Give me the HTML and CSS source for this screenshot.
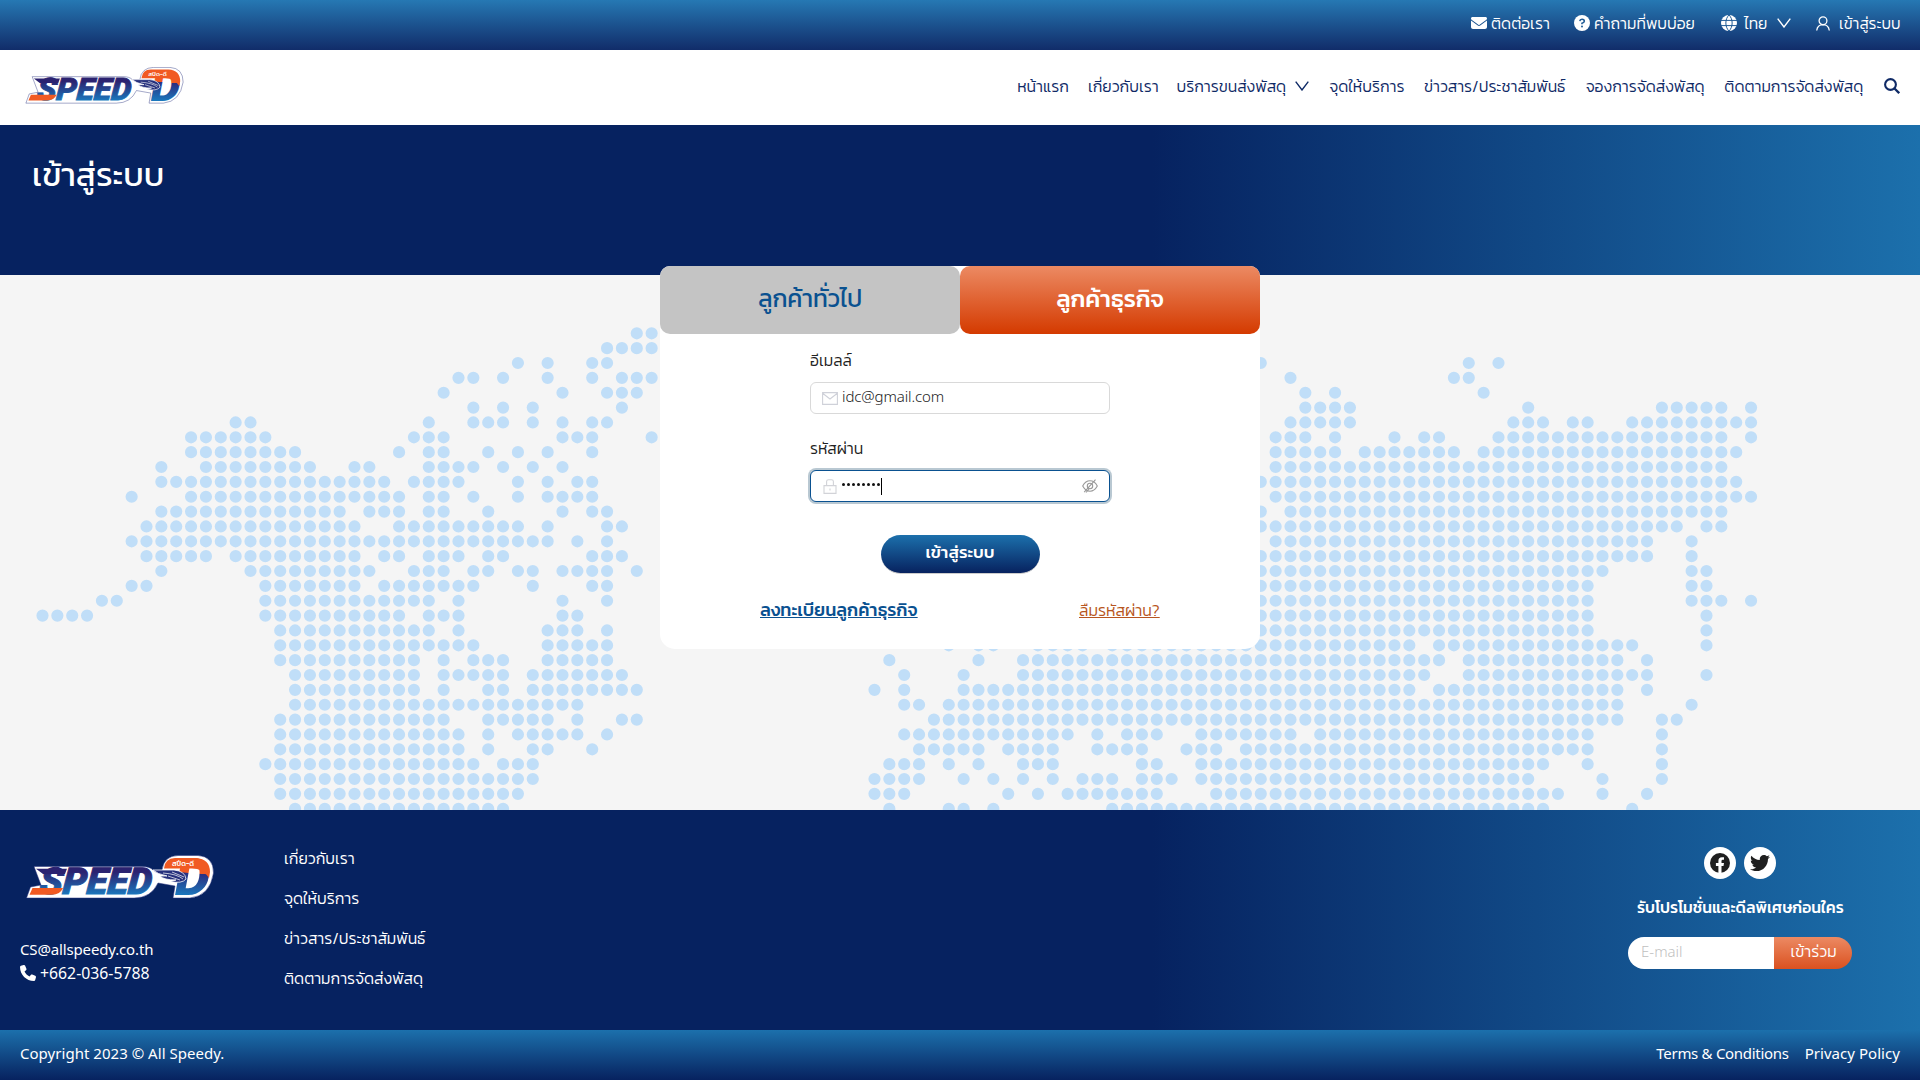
FILE: index.html
```html
<!DOCTYPE html>
<html lang="th">
<head>
<meta charset="utf-8">
<title>Speed-D</title>
<link rel="stylesheet" href="styles.css">
</head>
<body>
<svg class="defs" width="0" height="0" aria-hidden="true">
  <defs>
    <linearGradient id="letters" gradientUnits="userSpaceOnUse" x1="0" y1="13" x2="0" y2="40"><stop offset=".15" stop-color="#2b2270"/><stop offset="1" stop-color="#1b78bd"/></linearGradient>
    <linearGradient id="dee" gradientUnits="userSpaceOnUse" x1="160" y1="2" x2="157" y2="40"><stop offset=".4" stop-color="#f15a22"/><stop offset=".42" stop-color="#2b2f80"/><stop offset="1" stop-color="#1b78bd"/></linearGradient>
    <symbol id="logo" viewBox="0 0 188 44">
      <path class="logo-halo" d="M8 11.500 H116 Q124 11.500 127 15 L136 15 Q138 .8 152 .5 H172 Q187.500 1.500 187.500 18 Q184 41 164 43 H147 L149 31 L132 28 Q125 43 108 43 H.5 L4.500 32 L15 30 Z"/>
      <g class="logo-word" transform="skewX(-5)">
        <text x="16.500" y="39.500" textLength="112" lengthAdjust="spacingAndGlyphs">SPEED</text>
      </g>
      <path class="logo-blue" d="M10 13.700 H41 L39 19 H17 Z"/>
      <path class="logo-orange" d="M6.500 33 H37 Q34 39.800 26 39.800 H3.500 Z"/>
      <text class="logo-d" x="149" y="40" textLength="35" lengthAdjust="spacingAndGlyphs">D</text>
      <path class="logo-orange" d="M138 13.500 Q139 3 149 3 H170 Q184 4 184 17 L183 23 Q177 13.500 166 13.500 Z"/>
      <path class="logo-wing" d="M127 15 H148 Q159 16 160 24 Q156 29 144 26.500 L150 25 Q138 25 134 21 H141 Q131 19 127 15 Z"/>
      <path class="logo-feather" d="M137 18 Q151 19 157 24 M142 21 L154 25 M146 17 L158 22"/>
      <text class="logo-tag" x="146" y="10.500" textLength="22" lengthAdjust="spacingAndGlyphs">สปีด-ดี</text>
    </symbol>
    <symbol id="chevron" viewBox="0 0 14 10"><path d="M.7 .7 L7 9 L13.3 .7" fill="none" stroke="currentColor" stroke-width="1.4"/></symbol>
  </defs>
</svg>

<header>
  <div class="topbar">
    <a class="top-contact"><svg width="16" height="16" viewBox="0 0 512 512"><path fill="currentColor" d="M48 64C21.500 64 0 85.500 0 112c0 15.100 7.100 29.300 19.200 38.400L236.800 313.600c11.400 8.500 27 8.500 38.400 0L492.800 150.400c12.100-9.100 19.200-23.300 19.200-38.400c0-26.500-21.500-48-48-48H48zM0 176V384c0 35.300 28.700 64 64 64H448c35.300 0 64-28.700 64-64V176L294.400 339.200c-22.800 17.100-54 17.100-76.800 0L0 176z"/></svg><span class="w58">ติดต่อเรา</span></a>
    <a class="top-faq"><svg width="16" height="16" viewBox="0 0 16 16"><circle cx="8" cy="8" r="8" fill="#fff"/><path d="M5.800 6.100 Q6 4.300 8 4.300 Q10.300 4.300 10.300 6.200 Q10.300 7.400 8 8.300 V9.300" fill="none" stroke="#1f5b95" stroke-width="1.600"/><circle cx="8" cy="11.500" r="1" fill="#1f5b95"/></svg><span class="w102">คำถามที่พบบ่อย</span></a>
    <a class="top-lang"><svg width="16" height="16" viewBox="0 0 16 16"><circle cx="8" cy="8" r="8" fill="#fff"/><path d="M0 5.400H16M0 10.600H16M8 0C3.800 4 3.800 12 8 16M8 0C12.200 4 12.200 12 8 16" fill="none" stroke="#1f5b95" stroke-width="1"/></svg><span class="w23">ไทย</span><svg class="chev" width="14" height="10"><use href="#chevron"/></svg></a>
    <a class="top-login"><svg width="14" height="15" viewBox="0 0 14 15"><g fill="none" stroke="currentColor" stroke-width="1.300"><circle cx="7" cy="4.800" r="3.900"/><path d="M.7 14.500 Q1.500 8.800 7 8.700 Q12.500 8.800 13.300 14.500"/></g></svg><span class="w60">เข้าสู่ระบบ</span></a>
  </div>
  <nav class="nav">
    <svg class="nav-logo" width="159" height="37"><use href="#logo"/></svg>
    <div class="nav-links">
      <a class="w50">หน้าแรก</a>
      <a class="w68">เกี่ยวกับเรา</a>
      <a class="nav-drop"><span class="w109">บริการขนส่งพัสดุ</span><svg width="14" height="10"><use href="#chevron"/></svg></a>
      <a class="w74">จุดให้บริการ</a>
      <a class="w141">ข่าวสาร/ประชาสัมพันธ์</a>
      <a class="w118">จองการจัดส่งพัสดุ</a>
      <a class="w139">ติดตามการจัดส่งพัสดุ</a>
      <svg width="16" height="16" viewBox="0 0 16 16"><circle cx="6.500" cy="6.500" r="5.400" fill="none" stroke="currentColor" stroke-width="2.100"/><path d="M10.500 10.500 L15.200 15.200" stroke="currentColor" stroke-width="2.300"/></svg>
    </div>
  </nav>
</header>

<section class="banner"><h1>เข้าสู่ระบบ</h1></section>

<main class="main">
  <svg class="map" width="1920" height="535" aria-hidden="true">
    <g transform="translate(42.5 58.3) scale(14.857)">
      <path class="dots" d="M40 0h1.1
M38 1h3.1
M32 2h.1M34 2h.1M37 2h1.1M82 2h.1M96 2h.1M98 2h.1
M28 3h1.1M31 3h.1M34 3h.1M37 3h.1M39 3h2.1M84 3h.1M95 3h1.1
M27 4h.1M35 4h.1M38 4h2.1M85 4h.1M87 4h.1M97 4h.1
M29 5h.1M31 5h.1M33 5h.1M39 5h.1M85 5h3.1M100 5h.1M109 5h4.1M115 5h.1
M13 6h1.1M26 6h.1M29 6h2.1M33 6h.1M35 6h.1M37 6h1.1M84 6h4.1M99 6h2.1M103 6h1.1M107 6h8.1
M10 7h5.1M25 7h2.1M35 7h2.1M41 7h.1M83 7h2.1M87 7h.1M91 7h.1M93 7h1.1M98 7h15.1M115 7h.1
M10 8h7.1M24 8h.1M26 8h1.1M30 8h.1M32 8h.1M34 8h.1M37 8h.1M83 8h4.1M89 8h6.1M97 8h17.1
M8 9h.1M11 9h7.1M21 9h1.1M26 9h3.1M31 9h.1M33 9h.1M35 9h.1M83 9h30.1
M8 10h15.1M25 10h3.1M32 10h.1M34 10h.1M36 10h1.1M82 10h32.1
M6 11h.1M10 11h14.1M26 11h1.1M29 11h.1M32 11h.1M34 11h3.1M83 11h32.1
M8 12h12.1M22 12h2.1M26 12h1.1M30 12h.1M35 12h.1M37 12h1.1M82 12h.1M84 12h29.1
M7 13h14.1M24 13h8.1M34 13h.1M38 13h1.1M82 13h28.1M112 13h1.1
M6 14h28.1M36 14h.1M38 14h.1M83 14h25.1M111 14h.1
M7 15h4.1M13 15h8.1M23 15h1.1M26 15h2.1M30 15h1.1M37 15h2.1M82 15h26.1M111 15h.1
M8 16h.1M14 16h8.1M25 16h2.1M29 16h1.1M32 16h1.1M35 16h3.1M40 16h.1M82 16h23.1M111 16h1.1
M6 17h1.1M15 17h6.1M23 17h6.1M33 17h.1M37 17h1.1M82 17h22.1M111 17h1.1
M4 18h1.1M15 18h11.1M28 18h.1M35 18h.1M38 18h.1M82 18h22.1M111 18h2.1M115 18h.1
M0 19h3.1M15 19h9.1M26 19h2.1M35 19h1.1M82 19h22.1M112 19h.1
M16 20h10.1M28 20h.1M34 20h2.1M38 20h.1M82 20h22.1M112 20h.1
M16 21h13.1M34 21h4.1M61 21h.1M63 21h1.1M67 21h3.1M72 21h20.1M94 21h13.1M112 21h.1
M16 22h9.1M27 22h.1M29 22h2.1M34 22h4.1M57 22h.1M63 22h.1M66 22h28.1M96 22h10.1M108 22h.1
M17 23h8.1M27 23h4.1M33 23h6.1M58 23h.1M62 23h.1M66 23h27.1M96 23h12.1M112 23h.1
M17 24h8.1M27 24h.1M30 24h1.1M33 24h7.1M56 24h.1M58 24h.1M62 24h30.1M94 24h12.1M108 24h.1
M17 25h19.1M58 25h1.1M61 25h45.1M111 25h.1
M16 26h11.1M30 26h4.1M36 26h.1M39 26h1.1M60 26h46.1M109 26h1.1
M16 27h12.1M30 27h.1M32 27h4.1M38 27h.1M58 27h11.1M71 27h.1M73 27h2.1M78 27h6.1M86 27h18.1M109 27h.1
M16 28h12.1M30 28h.1M33 28h1.1M37 28h.1M59 28h4.1M65 28h3.1M71 28h3.1M77 28h2.1M81 28h23.1M109 28h.1
M15 29h14.1M31 29h2.1M57 29h2.1M61 29h.1M63 29h.1M66 29h2.1M74 29h1.1M78 29h23.1M104 29h.1M109 29h.1
M16 30h17.1M56 30h3.1M62 30h.1M64 30h.1M66 30h.1M68 30h.1M70 30h2.1M74 30h2.1M78 30h22.1M105 30h.1M109 30h.1
M16 31h16.1M56 31h2.1M65 31h.1M67 31h.1M69 31h6.1M79 31h23.1M105 31h.1M108 31h.1
M17 32h14.1M57 32h.1M61 32h1.1M64 32h.1M72 32h29.1M107 32h.1"/>
    </g>
  </svg>
  <div class="card">
    <div class="tabs">
      <button class="tab"><span class="w104">ลูกค้าทั่วไป</span></button>
      <button class="tab tab-active"><span class="w108">ลูกค้าธุรกิจ</span></button>
    </div>
    <form class="form">
      <label class="w42">อีเมลล์</label>
      <div class="field">
        <svg width="16" height="13" viewBox="0 0 16 13"><path d="M.6 .6H15.400V12.400H.6ZM.6 1.200L8 7L15.400 1.200" fill="none" stroke="#cfd1d9" stroke-width="1.100"/></svg>
        <span class="value">idc@gmail.com</span>
      </div>
      <label class="w54">รหัสผ่าน</label>
      <div class="field focus">
        <svg class="lock" width="14" height="15" viewBox="0 0 14 15"><path d="M1 6.600H13V14.400H1ZM3.600 6.600V2.600Q3.600 .7 5.500 .7H8.500Q10.400 .7 10.400 2.600V6.600M7 9.500V11.500" fill="none" stroke="#d2d3d8" stroke-width="1.100"/></svg>
        <span class="mask"><i></i><i></i><i></i><i></i><i></i><i></i><i></i><i></i></span><span class="caret"></span>
        <svg class="eye" width="16" height="14" viewBox="0 0 16 14"><g fill="none" stroke="#999" stroke-width="1.100"><path d="M.7 7Q3.500 1.800 8 1.800Q12.500 1.800 15.300 7Q12.500 12.200 8 12.200Q3.500 12.200 .7 7Z"/><circle cx="8" cy="7" r="2.700"/><path d="M2.200 13.200L13.500 .6M4 13.500L7 10"/></g></svg>
      </div>
      <button class="submit"><span class="w72">เข้าสู่ระบบ</span></button>
    </form>
    <div class="card-links">
      <a class="register w159">ลงทะเบียนลูกค้าธุรกิจ</a>
      <a class="forgot w81">ลืมรหัสผ่าน?</a>
    </div>
  </div>
</main>

<footer>
  <div class="footer-main">
    <div class="company">
      <svg width="188" height="44"><use href="#logo"/></svg>
      <p class="mail">CS@allspeedy.co.th</p>
      <p class="phone"><svg width="16" height="16" viewBox="0 0 512 512"><path fill="currentColor" d="M164.900 24.600c-7.700-18.600-28-28.500-47.400-23.200l-88 24C12.100 30.200 0 46 0 64C0 311.400 200.600 512 448 512c18 0 33.800-12.100 38.600-29.500l24-88c5.300-19.400-4.600-39.700-23.200-47.400l-96-40c-16.300-6.800-35.200-2.100-46.300 11.600L304.700 368C234.300 334.700 177.300 277.700 144 207.300L193.300 167c13.700-11.200 18.400-30 11.600-46.300l-40-96z"/></svg><span>+662-036-5788</span></p>
    </div>
    <div class="footer-links">
      <a class="w68">เกี่ยวกับเรา</a>
      <a class="w74">จุดให้บริการ</a>
      <a class="w141">ข่าวสาร/ประชาสัมพันธ์</a>
      <a class="w139">ติดตามการจัดส่งพัสดุ</a>
    </div>
    <div class="subscribe">
      <div class="social">
        <a><svg width="20" height="20" viewBox="0 0 20 20"><circle cx="10" cy="10" r="10" fill="#1f1f1f"/><path d="M8.400 20V13H5.900V10.100H8.400V7.900Q8.400 4.300 11.900 4.300H14V6.800H12.800Q11.500 6.800 11.500 8.100V10.100H14L13.500 13H11.500V20Z" fill="#fff"/></svg></a>
        <a><svg width="20" height="20" viewBox="0 0 512 512"><path fill="#1f1f1f" d="M459.370 151.716c.325 4.548.325 9.097.325 13.645 0 138.720-105.583 298.558-298.558 298.558-59.452 0-114.680-17.219-161.137-47.106 8.447.974 16.568 1.299 25.340 1.299 49.055 0 94.213-16.568 130.274-44.832-46.132-.975-84.792-31.188-98.112-72.772 6.498.974 12.995 1.624 19.818 1.624 9.421 0 18.843-1.300 27.614-3.573-48.081-9.747-84.143-51.980-84.143-102.985v-1.299c13.969 7.797 30.214 12.670 47.431 13.319-28.264-18.843-46.781-51.005-46.781-87.391 0-19.492 5.197-37.360 14.294-52.954 51.655 63.675 129.300 105.258 216.365 109.807-1.624-7.797-2.599-15.918-2.599-24.040 0-57.828 46.782-104.934 104.934-104.934 30.213 0 57.502 12.670 76.670 33.137 23.715-4.548 46.456-13.320 66.599-25.340-7.798 24.366-24.366 44.833-46.132 57.827 21.117-2.273 41.584-8.122 60.426-16.243-14.292 20.791-32.161 39.308-52.628 54.253z"/></svg></a>
      </div>
      <h2 class="w206">รับโปรโมชั่นและดีลพิเศษก่อนใคร</h2>
      <div class="join"><span class="join-input">E-mail</span><button class="join-btn"><span class="w45">เข้าร่วม</span></button></div>
    </div>
  </div>
  <div class="footer-bottom"><span class="copy">Copyright 2023 © All Speedy.</span><div class="legal"><a>Terms &amp; Conditions</a><a>Privacy Policy</a></div></div>
</footer>
</body>
</html>
```
FILE: styles.css
```css
* { box-sizing: border-box; }
body { margin: 0; width: 1920px; font: 300 15.800px/24px Kanit, "Noto Sans Thai", "Noto Sans", Loma, sans-serif; color: #222; background: #f5f5f5; overflow: hidden; }
h1, h2, p { margin: 0; }
svg { display: block; flex: none; }
button { border: 0; padding: 0; font: inherit; display: flex; align-items: center; justify-content: center; }
.defs { position: absolute; }
.w23, .w42, .w45, .w50, .w54, .w58, .w60, .w68, .w72, .w74, .w81, .w102, .w104, .w108, .w109, .w118, .w139, .w141, .w159, .w206 { display: block; white-space: nowrap; flex: none; }
.w23 { width: 23px; } .w42 { width: 42px; } .w45 { width: 45px; } .w50 { width: 50px; } .w54 { width: 54px; }
.w58 { width: 58px; } .w60 { width: 60px; } .w68 { width: 68px; } .w72 { width: 72px; } .w74 { width: 74px; }
.w81 { width: 81px; } .w102 { width: 102px; } .w104 { width: 104px; } .w108 { width: 108px; } .w109 { width: 109px; }
.w118 { width: 118px; } .w139 { width: 139px; } .w141 { width: 141px; } .w159 { width: 159px; } .w206 { width: 206px; }

.topbar { height: 50px; display: flex; justify-content: flex-end; align-items: center; gap: 25px; padding: 0 21px 4px; color: #fff; background: linear-gradient(#2678b3, #112c69); }
.topbar a { display: flex; align-items: center; gap: 4px; }
.topbar span, .nav-links .w50, .nav-links .w68, .nav-links .w74, .nav-links .w109, .nav-links .w118, .nav-links .w139, .nav-links .w141 { padding-top: 2px; }
.topbar .top-lang { gap: 7px; }
.topbar .top-login { gap: 9px; font-size: 15.500px; }
.chev { margin-left: 3px; }

.nav { height: 75px; background: #fff; color: #0f2a66; display: flex; justify-content: space-between; padding: 0 20px 0 25px; }
.nav-logo { margin-top: 17px; }
.nav-links { display: flex; align-items: center; gap: 20.700px; padding-bottom: 3px; }
.nav-drop { display: flex; align-items: center; gap: 9px; }

.banner, .footer-main { background: linear-gradient(90deg, #062260 60%, #1c70ac); }
.banner { height: 150px; padding: 29px 32px; }
h1 { color: #fff; font-size: 33px; line-height: 42px; font-weight: 400; }

.main { height: 535px; position: relative; display: flex; justify-content: center; align-items: flex-start; }
.map { position: absolute; inset: 0; }
.dots { fill: none; stroke: #c0def8; stroke-width: .82; stroke-linecap: round; stroke-dasharray: 0 1; }
.card { position: relative; width: 600px; height: 383px; margin-top: -9px; background: #fff; border-radius: 10px 10px 15px 15px; }
.tabs { display: flex; height: 68px; }
.tab { flex: 1; border-radius: 10px; background: #c4c4c4; color: #0a5190; font-size: 24.500px; font-weight: 400; letter-spacing: -.1px; padding-bottom: 2px; }
.tab-active { color: #fff; background: linear-gradient(#ec8a63, #d43a00); font-size: 24px; font-weight: 500; }
.form { width: 300px; margin: 0 auto; padding-top: 15px; display: flex; flex-direction: column; }
.form label { line-height: 24px; }
.field { height: 32px; margin: 9px 0 23px; border: 1px solid #d9d9d9; border-radius: 6px; display: flex; align-items: center; padding: 0 11px; gap: 4px; background: #fff; }
.value { font-family: "Noto Sans", sans-serif; font-size: 15px; font-weight: 350; letter-spacing: -.1px; padding-bottom: 4px; }
.focus { border-color: #0a5190; box-shadow: 0 0 0 2px #b9c8d2; margin-bottom: 33px; }
.lock { margin: 0 1px; }
.mask { display: flex; gap: 1px; padding-bottom: 3px; }
.mask i { width: 3px; height: 3px; border: 0; border-radius: 50%; background: #111; margin-right: 1px; }
.caret { width: 1px; height: 17px; background: #000; margin-left: -4px; }
.eye { margin-left: auto; }
.submit { width: 159px; height: 39px; align-self: center; border-radius: 20px; color: #fff; font-size: 17px; font-weight: 500; background: linear-gradient(#1c70ac, #07225f); border-bottom: 1px solid #ccc; padding-bottom: 4px; }
.card-links { display: flex; justify-content: space-between; padding: 24px 100px 0; }
.card-links a { text-decoration: underline; }
.register { color: #0a5190; font-weight: 500; font-size: 18px; }
.forgot { color: #b75520; font-size: 16px; }

.footer-main { height: 220px; color: #fff; display: flex; padding: 0 68px 0 20px; }
.company { width: 264px; padding-top: 45px; font-family: "Noto Sans", sans-serif; font-weight: 400; }
.company svg { margin-left: 6px; }
.company .mail { margin-top: 38px; font-size: 15px; letter-spacing: -.15px; }
.phone { display: flex; align-items: center; gap: 4px; font-size: 15.800px; }
.company .phone svg { margin-left: 0; }
.footer-links { display: flex; flex-direction: column; gap: 16px; padding-top: 37px; }
.subscribe { margin-left: auto; width: 224px; display: flex; flex-direction: column; align-items: center; padding-top: 37px; }
.social { display: flex; gap: 8px; }
.social a { width: 32px; height: 32px; border-radius: 50%; background: #fff; display: flex; align-items: center; justify-content: center; }
h2 { font-size: 15.850px; font-weight: 500; margin-top: 17px; }
.join { display: flex; width: 224px; height: 32px; border-radius: 16px; overflow: hidden; margin-top: 17px; }
.join-input { width: 146px; background: #fff; color: #bfbfbf; padding: 2px 13px; font-family: "Noto Sans", sans-serif; font-size: 15px; font-weight: 300; }
.join-btn { width: 78px; color: #fff; background: linear-gradient(#ec8a63, #da5120); padding-bottom: 2px; }
.footer-bottom { height: 50px; padding: 0 20px 4px; display: flex; align-items: center; justify-content: space-between; color: #fff; font-family: "Noto Sans", sans-serif; font-weight: 400; font-size: 15px; background: linear-gradient(#1c70ac, #07225f); }
.copy { letter-spacing: .03px; }
.legal { display: flex; gap: 16px; letter-spacing: -.15px; }
.legal a:first-child { letter-spacing: -.3px; }
.legal a:last-child { letter-spacing: .05px; }

.logo-halo { fill: #fff; stroke: #26307c; stroke-width: .5; }
.logo-word text { font: italic 900 37px "Roboto", sans-serif; fill: url(#letters); stroke: url(#letters); stroke-width: 1; }
.logo-blue { fill: #2b2270; }
.logo-orange { fill: #f15a22; }
.logo-d { font: italic 900 51px "Roboto", sans-serif; fill: url(#dee); }
.logo-wing { fill: #26307c; stroke: #fff; stroke-width: .8; }
.logo-feather { fill: none; stroke: #fff; stroke-width: .7; }
.logo-tag { font: 500 7px Kanit, "Noto Sans Thai", sans-serif; fill: #fff; }
```
